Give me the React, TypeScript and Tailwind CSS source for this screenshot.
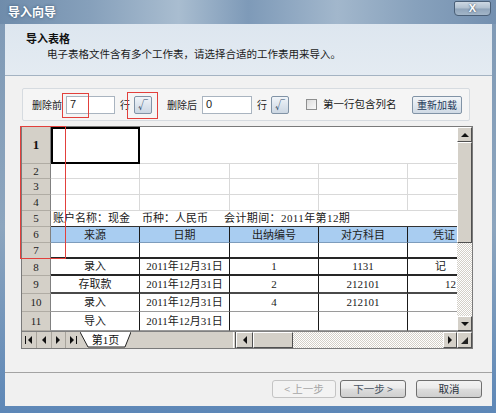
import React from "react";

const colW = ["w-[89px]", "w-[90px]", "w-[89px]", "w-[89px]", "w-[70px]"];

function RH({ n, bold }: { n: string; bold?: boolean }) {
  return (
    <div
      className={
        bold
          ? "w-[29px] h-full shrink-0 bg-[#d4d0c8] border-r border-b border-r-[#808080] border-b-[#b0aca4] flex items-center justify-center font-['Liberation_Serif',serif] text-[13px] font-bold text-[#111]"
          : "w-[29px] h-full shrink-0 bg-[#d4d0c8] border-r border-b border-r-[#808080] border-b-[#b0aca4] flex items-center justify-center font-['Liberation_Serif',serif] text-[11px] text-[#222]"
      }
    >
      {n}
    </div>
  );
}

function Btn3D({ className, children }: { className: string; children?: React.ReactNode }) {
  return (
    <div
      className={
        "shrink-0 bg-[#d4d0c8] border border-t-white border-l-white border-r-[#505050] border-b-[#505050] flex items-center justify-center " +
        className
      }
    >
      {children}
    </div>
  );
}

const hatch =
  "bg-[repeating-conic-gradient(#d4d0c8_0%_25%,#ffffff_0%_50%)] bg-[length:2px_2px]";

function Tri({ dir }: { dir: "l" | "r" | "u" | "d" }) {
  const pts =
    dir === "l" ? "5,0 5,8 1,4" : dir === "r" ? "1,0 1,8 5,4" : dir === "u" ? "0,5 8,5 4,1" : "0,1 8,1 4,5";
  const w = dir === "l" || dir === "r" ? 6 : 8;
  const h = dir === "l" || dir === "r" ? 8 : 6;
  return (
    <svg width={w} height={h} viewBox={`0 0 ${w} ${h}`}>
      <polygon points={pts} fill="#111" />
    </svg>
  );
}

const dataRows = [
  { n: "8", h: "h-[17px]", b: "border-b-2 border-b-[#262626]", e: "pl-[27px]", c: ["录入", "2011年12月31日", "1", "1131", "记"] },
  { n: "9", h: "h-[18px]", b: "border-b-2 border-b-[#4a4a4a]", e: "pl-[37px]", c: ["存取款", "2011年12月31日", "2", "212101", "12"] },
  { n: "10", h: "h-[18px]", b: "border-b border-b-[#9a9a9a]", e: "pl-[27px]", c: ["录入", "2011年12月31日", "4", "212101", ""] },
  { n: "11", h: "h-[19px]", b: "border-b border-b-[#9a9a9a]", e: "pl-[27px]", c: ["导入", "2011年12月31日", "", "", ""] },
];

export default function App() {
  return (
    <div className="relative w-[496px] h-[413px] overflow-hidden flex flex-col bg-[linear-gradient(180deg,#7f99b5_0%,#8ca5be_55%,#5d87b7_100%)] font-['Noto_Sans_CJK_SC',sans-serif] text-[#1a1a1a]">
      {/* title bar */}
      <div className="h-[24px] shrink-0 flex items-start justify-between bg-[linear-gradient(90deg,#6f8cab_0%,#86a0bb_18%,#a9bdd0_36%,#7e9ab8_50%,#a2b7cc_68%,#87a1bc_84%,#7490b0_100%)]">
        <span className="ml-[8px] mt-[5px] text-[12px] leading-[14px] font-bold text-white [text-shadow:0_0_3px_#38536f]">
          导入向导
        </span>
        <div className="mt-[1px] mr-[5px] w-[37px] h-[15px] rounded-b-[4px] rounded-t-[2px] border border-[#4a5f77] bg-[linear-gradient(180deg,#cdd8e3_0%,#afbfcf_48%,#8fa4ba_52%,#a3b6c9_100%)] flex items-center justify-center text-white text-[11px] font-bold leading-none font-['Liberation_Sans',sans-serif] [text-shadow:0_0_2px_#2c3e52]">
          X
        </div>
      </div>

      {/* body */}
      <div className="flex-1 ml-[5px] mr-[4px] flex flex-col">
        {/* header */}
        <div className="h-[52px] shrink-0 border-b border-[#a4b3c2] bg-[linear-gradient(180deg,#dde6ef_0%,#e4ebf2_100%)] flex flex-col pt-[8px]">
          <div className="pl-[21px] text-[11px] leading-[13px] font-bold text-[#111]">导入表格</div>
          <div className="pl-[42px] mt-[2px] text-[10.5px] leading-[13px] text-[#1a1a1a]">
            电子表格文件含有多个工作表，请选择合适的工作表用来导入。
          </div>
        </div>

        {/* main */}
        <div className="h-[296px] shrink-0 bg-[#f1f1f1] flex flex-col">
          {/* group box */}
          <div className="ml-[17px] mt-[12px] w-[448px] h-[33px] rounded-[2px] border border-[#d6dbe0] bg-[#f5f5f5] flex items-center text-[10px] leading-none whitespace-nowrap">
            <span className="ml-[9px] w-[30px] shrink-0 whitespace-nowrap">删除前</span>
            <div className="ml-[4px] w-[49px] h-[18px] shrink-0 bg-white border border-[#a9b4c0] flex items-center pl-[3px] font-['Liberation_Sans',sans-serif] text-[11px]">
              7
            </div>
            <span className="ml-[5px] w-[10px] shrink-0">行</span>
            <div className="ml-[4px] w-[18px] h-[18px] shrink-0 rounded-[2px] border border-[#8193a6] bg-[linear-gradient(180deg,#f1f5f9_0%,#dde5ee_50%,#ccd7e3_100%)] flex items-center justify-center text-[10px] text-[#2f4a66]">
              √
            </div>
            <span className="ml-[15px] w-[30px] shrink-0 whitespace-nowrap">删除后</span>
            <div className="ml-[5px] w-[50px] h-[18px] shrink-0 bg-white border border-[#a9b4c0] flex items-center pl-[3px] font-['Liberation_Sans',sans-serif] text-[11px]">
              0
            </div>
            <span className="ml-[5px] w-[10px] shrink-0">行</span>
            <div className="ml-[4px] w-[18px] h-[18px] shrink-0 rounded-[2px] border border-[#8193a6] bg-[linear-gradient(180deg,#f1f5f9_0%,#dde5ee_50%,#ccd7e3_100%)] flex items-center justify-center text-[10px] text-[#2f4a66]">
              √
            </div>
            <div className="ml-[17px] w-[11px] h-[11px] shrink-0 border border-[#8e8f8f] bg-[linear-gradient(135deg,#dcdcdc_0%,#fafafa_100%)]" />
            <span className="ml-[6px] w-[76px] shrink-0 text-[10.5px] whitespace-nowrap">第一行包含列名</span>
            <div className="ml-[13px] w-[50px] h-[18px] shrink-0 rounded-[2px] border border-[#8193a6] bg-[linear-gradient(180deg,#f2f5f8_0%,#e1e8ef_50%,#d0dae5_100%)] flex items-center justify-center text-[10px] text-[#1f3a5a]">
              重新加载
            </div>
          </div>

          {/* grid */}
          <div className="ml-[16px] mt-[5px] w-[452px] h-[223px] border border-[#7a7a7a] bg-white flex flex-col">
            <div className="flex h-[204px] shrink-0">
              <div className="w-[435px] h-full overflow-hidden flex flex-col">
                {/* row 1 */}
                <div className="h-[37px] shrink-0 flex">
                  <RH n="1" bold />
                  <div className="w-[89px] h-full shrink-0 border-2 border-black" />
                  <div className="flex-1 h-full border-b border-[#d9d9d9]" />
                </div>
                {/* rows 2-4 */}
                {[
                  ["2", "h-[15px]"],
                  ["3", "h-[16px]"],
                  ["4", "h-[16px]"],
                ].map(([n, h]) => (
                  <div key={n} className={h + " shrink-0 flex"}>
                    <RH n={n} />
                    {colW.map((w, i) => (
                      <div key={i} className={w + " h-full shrink-0 border-r border-b border-[#d9d9d9]"} />
                    ))}
                  </div>
                ))}
                {/* row 5 */}
                <div className="h-[16px] shrink-0 flex">
                  <RH n="5" />
                  <div className="flex-1 h-full border-b border-b-[#333] flex items-center pl-[2px] whitespace-nowrap text-[11px] leading-none font-['Liberation_Serif','Noto_Sans_CJK_SC',serif]">
                    <span>账户名称：现金</span>
                    <span className="ml-[12px]">币种：人民币</span>
                    <span className="ml-[16px] tracking-[0.4px]">会计期间：2011年第12期</span>
                  </div>
                </div>
                {/* row 6 header */}
                <div className="h-[16px] shrink-0 flex">
                  <RH n="6" />
                  {["来源", "日期", "出纳编号", "对方科目"].map((t, i) => (
                    <div
                      key={t}
                      className={
                        colW[i] +
                        " h-full shrink-0 bg-[#a9cdf1] border-r border-b border-r-[#1a1a1a] border-b-[#7d9cbc] flex items-center justify-center text-[11px] leading-none text-[#222]"
                      }
                    >
                      {t}
                    </div>
                  ))}
                  <div className="w-[70px] h-full shrink-0 bg-[#a9cdf1] border-b border-b-[#7d9cbc] flex items-center pl-[25px] text-[11px] leading-none text-[#222] whitespace-nowrap">
                    凭证
                  </div>
                </div>
                {/* row 7 */}
                <div className="h-[16px] shrink-0 flex">
                  <RH n="7" />
                  {colW.map((w, i) => (
                    <div key={i} className={w + " h-full shrink-0 border-r border-b-2 border-r-[#1a1a1a] border-b-[#262626]"} />
                  ))}
                </div>
                {/* data rows */}
                {dataRows.map((r) => (
                  <div key={r.n} className={r.h + " shrink-0 flex"}>
                    <RH n={r.n} bold={false} />
                    {r.c.map((t, i) => (
                      <div
                        key={i}
                        className={
                          i === 4
                            ? colW[i] + " h-full shrink-0 flex items-center whitespace-nowrap text-[11px] leading-none font-['Liberation_Serif','Noto_Sans_CJK_SC',serif] " + r.e + " " + r.b
                            : colW[i] + " h-full shrink-0 border-r border-r-[#1a1a1a] flex items-center justify-center whitespace-nowrap text-[11px] leading-none font-['Liberation_Serif','Noto_Sans_CJK_SC',serif] " + r.b
                        }
                      >
                        {t}
                      </div>
                    ))}
                  </div>
                ))}
              </div>
              {/* vertical scrollbar */}
              <div className="w-[15px] h-full flex flex-col">
                <Btn3D className="w-[15px] h-[15px]">
                  <Tri dir="u" />
                </Btn3D>
                <Btn3D className="w-[15px] h-[101px]" />
                <div className={"flex-1 " + hatch} />
                <Btn3D className="w-[15px] h-[15px]">
                  <Tri dir="d" />
                </Btn3D>
              </div>
            </div>
            {/* tab bar */}
            <div className="h-[17px] shrink-0 flex bg-[#d4d0c8] border-t border-[#808080]">
              <div className="w-[58px] h-full flex">
                <div className="flex-1 flex items-center justify-center gap-[1px] border-r border-[#a8a49c]">
                  <div className="w-[1px] h-[8px] bg-[#111]" />
                  <Tri dir="l" />
                </div>
                <div className="flex-1 flex items-center justify-center border-r border-[#a8a49c]">
                  <Tri dir="l" />
                </div>
                <div className="flex-1 flex items-center justify-center border-r border-[#a8a49c]">
                  <Tri dir="r" />
                </div>
                <div className="flex-1 flex items-center justify-center gap-[1px]">
                  <Tri dir="r" />
                  <div className="w-[1px] h-[8px] bg-[#111]" />
                </div>
              </div>
              <div className="relative w-[51px] h-full shrink-0 flex items-center justify-center">
                <svg className="absolute inset-0" width="51" height="16" viewBox="0 0 51 16">
                  <polygon points="0,0 51,0 45,15 8,15" fill="#ffffff" />
                  <polyline points="0,0 8,15 45,15 51,0" fill="none" stroke="#222" strokeWidth="1" />
                </svg>
                <span className="relative text-[11px] leading-none font-['Liberation_Serif','Noto_Sans_CJK_SC',serif] text-[#111]">
                  第1页
                </span>
              </div>
              <div className="w-[102px] h-full shrink-0 bg-[#d4d0c8]" />
              <div className="w-[3px] h-full shrink-0 border-l border-r border-l-white border-r-[#505050] bg-[#d4d0c8]" />
              <Btn3D className="w-[17px] h-full">
                <Tri dir="l" />
              </Btn3D>
              <Btn3D className="w-[40px] h-full" />
              <div className={"w-[150px] h-full shrink-0 " + hatch} />
              <Btn3D className="w-[14px] h-full">
                <Tri dir="r" />
              </Btn3D>
              <Btn3D className="w-[15px] h-full">
                <svg width="7" height="7" viewBox="0 0 7 7">
                  <polygon points="7,0 7,7 0,7" fill="#222" />
                </svg>
              </Btn3D>
            </div>
          </div>
        </div>

        {/* footer */}
        <div className="h-[34px] shrink-0 border-t border-[#a3a3a3] bg-[#f0f0f0] flex justify-end items-start pt-[7px] pr-[10px] text-[10.5px] leading-none">
          <div className="w-[64px] h-[18px] rounded-[3px] border border-[#c4c4c4] bg-[#f3f3f3] flex items-center justify-center text-[#a6a6a6]">
            &lt; 上一步
          </div>
          <div className="ml-[4px] w-[66px] h-[18px] rounded-[3px] border border-[#6f6f6f] bg-[linear-gradient(180deg,#f3f3f3_0%,#ebebeb_45%,#dddddd_50%,#cfcfcf_100%)] flex items-center justify-center text-[#4a5563]">
            下一步 &gt;
          </div>
          <div className="ml-[10px] w-[66px] h-[18px] rounded-[3px] border border-[#6f6f6f] bg-[linear-gradient(180deg,#f3f3f3_0%,#ebebeb_45%,#dddddd_50%,#cfcfcf_100%)] flex items-center justify-center text-[#2a3340]">
            取消
          </div>
        </div>
      </div>
      {/* bottom frame */}
      <div className="h-[7px] shrink-0" />

      {/* red annotation boxes */}
      <div className="absolute left-[62px] top-[93px] w-[27px] h-[25px] border border-[#e2403c]" />
      <div className="absolute left-[127px] top-[92px] w-[31px] h-[27px] border border-[#e2403c]" />
      <div className="absolute left-[20px] top-[126px] w-[46px] h-[133px] border border-[#e2403c]" />
    </div>
  );
}
